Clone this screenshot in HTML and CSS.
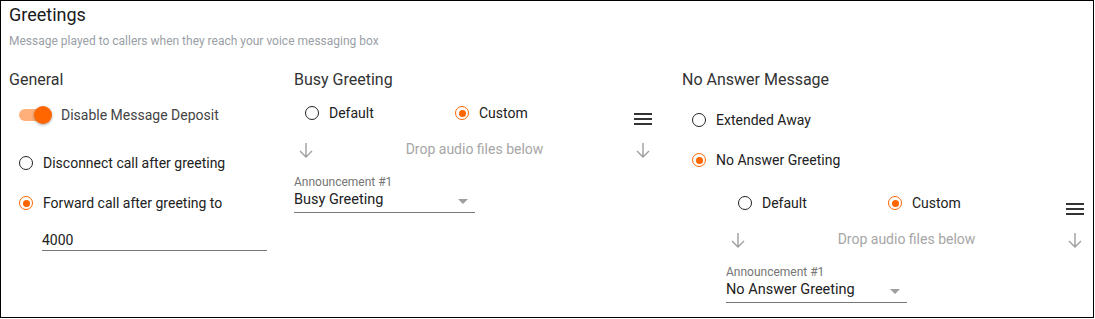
FILE: index.html
```html
<!DOCTYPE html>
<html lang="en">
<head>
    <meta charset="UTF-8">
    <title>Greetings</title>
    <link rel="stylesheet" href="styles.css">
</head>
<body>
    <div class="card">
        <div class="title">Greetings</div>
        <div class="subtitle">Message played to callers when they reach your voice messaging box</div>

        <div class="columns">
            <!-- general -->
            <div class="col col-general">
                <div class="col-title">General</div>
                <label class="switch-row">
                    <span class="switch"><span class="track"></span><span class="thumb"></span></span>
                    Disable Message Deposit
                </label>
                <label class="radio r-disconnect"><span class="dot"></span>Disconnect call after greeting</label>
                <label class="radio checked r-forward"><span class="dot"></span>Forward call after greeting to</label>
                <div class="text-field">4000</div>
            </div>

            <!-- busy -->
            <div class="col col-busy">
                <div class="col-title">Busy Greeting</div>
                <div class="greeting-editor busy-editor">
                    <div class="editor-top">
                        <label class="radio"><span class="dot"></span>Default</label>
                        <label class="radio checked"><span class="dot"></span>Custom</label>
                        <svg class="menu-icon" width="24" height="24" viewBox="0 0 24 24"><path d="M3 6h18v2H3zM3 11h18v2H3zM3 16h18v2H3z" fill="#333"/></svg>
                    </div>
                    <div class="drop-row">
                        <svg class="arrow" width="24" height="16" viewBox="0 0 24 16"><path d="M12 1v14M6 9l6 6 6-6" fill="none" stroke="#9e9e9e" stroke-width="1.4"/></svg>
                        <span class="drop-text">Drop audio files below</span>
                        <svg class="arrow" width="24" height="16" viewBox="0 0 24 16"><path d="M12 1v14M6 9l6 6 6-6" fill="none" stroke="#9e9e9e" stroke-width="1.4"/></svg>
                    </div>
                    <div class="select-label">Announcement #1</div>
                    <div class="select">Busy Greeting<span class="caret"></span></div>
                </div>
            </div>

            <!-- no answer -->
            <div class="col col-noanswer">
                <div class="col-title">No Answer Message</div>
                <label class="radio r-away"><span class="dot"></span>Extended Away</label>
                <label class="radio checked r-noanswer"><span class="dot"></span>No Answer Greeting</label>
                <div class="greeting-editor nested-editor">
                    <div class="editor-top">
                        <label class="radio"><span class="dot"></span>Default</label>
                        <label class="radio checked"><span class="dot"></span>Custom</label>
                        <svg class="menu-icon" width="24" height="24" viewBox="0 0 24 24"><path d="M3 6h18v2H3zM3 11h18v2H3zM3 16h18v2H3z" fill="#333"/></svg>
                    </div>
                    <div class="drop-row">
                        <svg class="arrow" width="24" height="16" viewBox="0 0 24 16"><path d="M12 1v14M6 9l6 6 6-6" fill="none" stroke="#9e9e9e" stroke-width="1.4"/></svg>
                        <span class="drop-text">Drop audio files below</span>
                        <svg class="arrow" width="24" height="16" viewBox="0 0 24 16"><path d="M12 1v14M6 9l6 6 6-6" fill="none" stroke="#9e9e9e" stroke-width="1.4"/></svg>
                    </div>
                    <div class="select-label">Announcement #1</div>
                    <div class="select">No Answer Greeting<span class="caret"></span></div>
                </div>
            </div>
        </div>
    </div>
</body>
</html>
```

FILE: styles.css
```css
body {
    margin: 0;
    background: #fff;
    font-family: Roboto, "Noto Sans", Arial, sans-serif;
    color: #212121;
}
.card {
    width: 1094px;
    height: 318px;
    box-sizing: border-box;
    border: 1px solid #000;
    padding: 3px 8px 0 8px;
    overflow: hidden;
}
.title {
    font-size: 18px;
    line-height: 22px;
    color: #1a1a1a;
}
.subtitle {
    margin-top: 7px;
    font-size: 12px;
    line-height: 16px;
    color: #9aa0a6;
}
.columns {
    display: flex;
    margin-top: 21px;
}
.col-general {
    width: 285px;
    flex-shrink: 0;
}
.col-busy {
    width: 388px;
    flex-shrink: 0;
}
.col-noanswer {
    flex: 1;
    min-width: 0;
}
.col-title {
    font-size: 16px;
    line-height: 20px;
    color: #333;
}

/* switch */
.switch-row {
    display: flex;
    align-items: center;
    height: 20px;
    margin-top: 15px;
    padding-left: 10px;
    font-size: 14px;
    color: #444;
}
.switch {
    position: relative;
    width: 34px;
    height: 20px;
    margin-right: 8px;
}
.track {
    position: absolute;
    left: 0;
    top: 4px;
    width: 30px;
    height: 12px;
    border-radius: 6px;
    background: #ffb07a;
}
.thumb {
    position: absolute;
    left: 15px;
    top: 1px;
    width: 18px;
    height: 18px;
    border-radius: 50%;
    background: #ff6600;
    box-shadow: 0 1px 3px rgba(0, 0, 0, 0.35);
}

/* radios */
.radio {
    display: flex;
    align-items: center;
    height: 20px;
    font-size: 14px;
    line-height: 20px;
    color: #212121;
    padding-left: 10px;
}
.radio .dot {
    width: 14px;
    height: 14px;
    box-sizing: border-box;
    border: 1.5px solid #222;
    border-radius: 50%;
    margin-right: 10px;
    display: flex;
    align-items: center;
    justify-content: center;
    flex-shrink: 0;
}
.radio.checked .dot {
    border-color: #ff6600;
}
.radio.checked .dot::after {
    content: "";
    width: 7px;
    height: 7px;
    border-radius: 50%;
    background: #ff6600;
}
.r-disconnect {
    margin-top: 28px;
}
.r-forward {
    margin-top: 20px;
}
.r-away {
    margin-top: 20px;
}
.r-noanswer {
    margin-top: 20px;
}

.text-field {
    margin-top: 17px;
    margin-left: 33px;
    width: 225px;
    font-size: 14px;
    line-height: 20px;
    border-bottom: 1px solid #777;
    color: #212121;
}

/* greeting editor */
.greeting-editor {
    width: 361px;
}
.busy-editor {
    margin-top: 13px;
}
.nested-editor {
    margin-top: 23px;
    margin-left: 44px;
}
.editor-top {
    display: flex;
    align-items: flex-start;
    height: 20px;
}
.editor-top .radio {
    width: 150px;
    padding-left: 0;
}
.editor-top .radio:first-child {
    margin-left: 11px;
}
.nested-editor .editor-top .radio:first-child {
    margin-left: 12px;
}
.menu-icon {
    margin-left: auto;
    margin-top: 4px;
}
.drop-row {
    display: flex;
    align-items: center;
    height: 20px;
    margin-top: 16px;
}
.arrow {
    margin-top: 2px;
}
.drop-text {
    flex: 1;
    text-align: center;
    font-size: 14px;
    color: #a6a6a6;
}
.select-label {
    margin-top: 15px;
    font-size: 12px;
    line-height: 16px;
    color: #757575;
}
.select {
    position: relative;
    width: 181px;
    font-size: 14.5px;
    line-height: 20px;
    padding-bottom: 2px;
    border-bottom: 1px solid #777;
    color: #212121;
}
.caret {
    position: absolute;
    right: 7px;
    top: 9px;
    width: 0;
    height: 0;
    border-left: 5px solid transparent;
    border-right: 5px solid transparent;
    border-top: 5px solid #9e9e9e;
}
```
